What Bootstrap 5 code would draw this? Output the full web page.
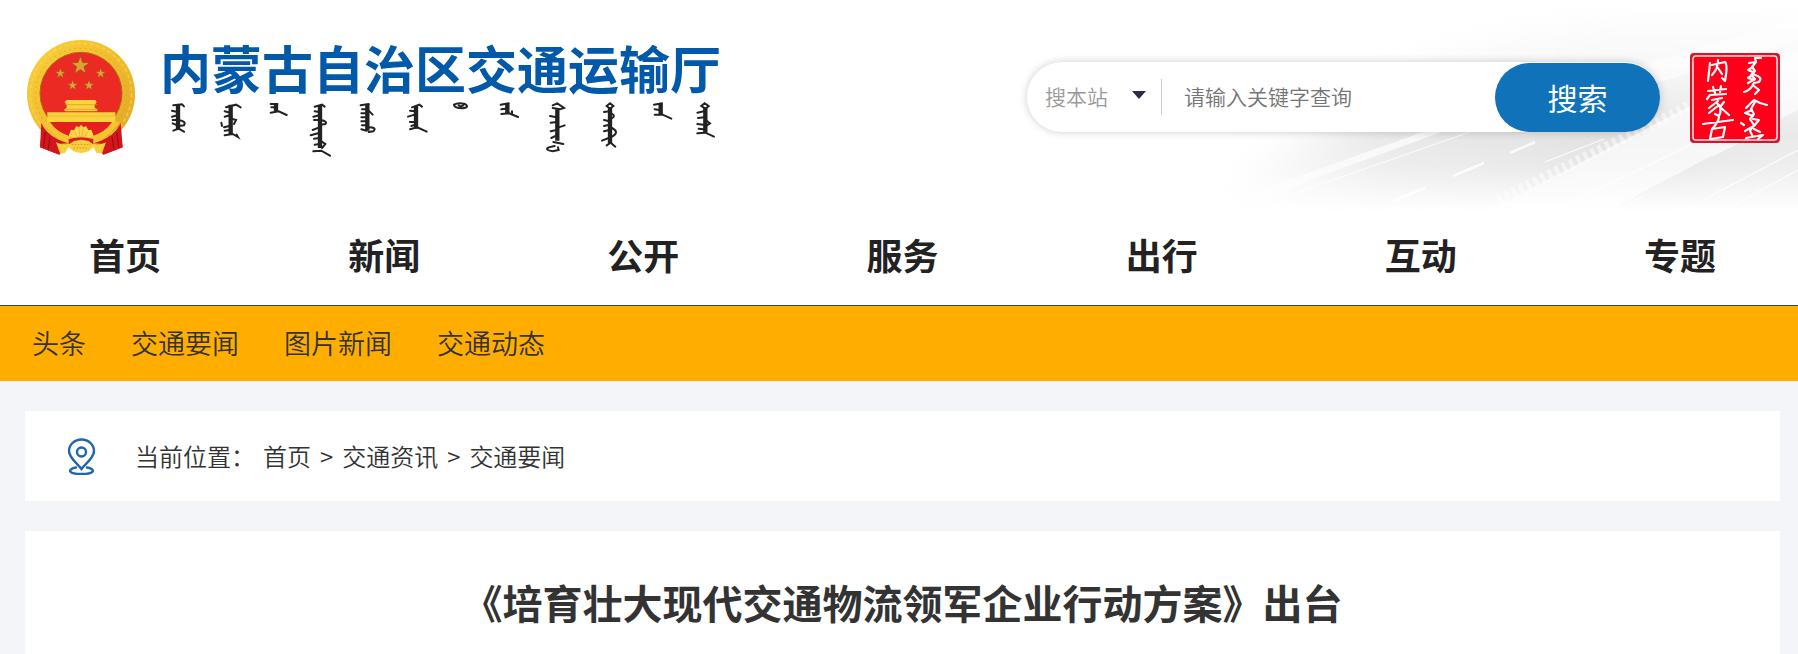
<!DOCTYPE html>
<html lang="zh-CN">
<head>
<meta charset="utf-8">
<meta name="viewport" content="width=device-width, initial-scale=1">
<title>《培育壮大现代交通物流领军企业行动方案》出台</title>
<link href="https://cdn.jsdelivr.net/npm/bootstrap@5.3.0/dist/css/bootstrap.min.css" rel="stylesheet">
<style>
  body { font-family: "Noto Sans CJK SC", sans-serif; background: #f3f5f9; color: #333; }
  a { color: inherit; text-decoration: none; }
  .top { background: #fff; min-height: 215px; padding: 36px 18px 0 26px; }
  .road { position: absolute; top: 0; right: 0; width: 618px; height: 225px; }
  .emblem { width: 110px; height: 115px; margin-top: 4px; }
  .brand { margin-left: 24px; }
  .brand-name { font-size: 51px; line-height: 62px; font-weight: 700; color: #0259a9; }
  .script-row { width: 580px; height: 64px; }
  .search { flex: 0 1 633px; height: 70px; margin: 26px 30px 0 auto; background: #fff; border-radius: 35px; box-shadow: 0 0 8px rgba(0,0,0,.2); }
  .search .form-select { width: 116px; height: 40px; margin-left: 18px; padding: 0 30px 2px 0; border: 0; background-color: transparent; color: #999; font-size: 21px; line-height: 36px; font-weight: 350;
    background-image: url("data:image/svg+xml,%3Csvg xmlns='http://www.w3.org/2000/svg' viewBox='0 0 14 8'%3E%3Cpath d='M0 0h14L7 8z' fill='%232c2c48'/%3E%3C/svg%3E"); background-size: 14px 8px; background-position: 87px 14px; }
  .search .form-control { height: 36px; padding: 0 0 2px 22px; border: 0; border-left: 1px solid #ccc; border-radius: 0; background: transparent; font-size: 21px; line-height: 34px; font-weight: 350; min-width: 0; }
  .search .form-control::placeholder { color: #757575; opacity: 1; }
  .search .btn { flex: 0 0 165px; height: 69px; align-self: flex-end; padding: 0; border: 0; border-radius: 35px; background: #1073b9; color: #fff; font-size: 30px; line-height: 69px; font-weight: 400; }
  .seal { width: 90px; height: 90px; margin-top: 17px; }
  .main-nav { background: #fff; height: 91px; padding: 0 82px 0 89px; border-bottom: 1px solid #22524a; }
  .main-nav a { font-size: 36px; line-height: 78px; font-weight: 700; color: #222; }
  .sub-nav { background: #ffae00; height: 75px; padding: 0 32px; gap: 45px; }
  .sub-nav a { font-size: 27px; line-height: 73px; font-weight: 350; color: #333; white-space: nowrap; }
  .page { padding: 30px 18px 0 25px; }
  .panel { background: #fff; }
  .crumbs { height: 90px; padding-left: 42px; margin-bottom: 30px; font-size: 24px; line-height: 90px; font-weight: 350; }
  .crumbs .pin { width: 30px; height: 38px; margin-right: 38px; }
  .crumbs .breadcrumb { --bs-breadcrumb-divider: ">"; --bs-breadcrumb-item-padding-x: 9px; --bs-breadcrumb-divider-color: #333; font-size: 24px; }
  .article { min-height: 123px; padding-top: 41px; }
  .article h1 { font-size: 40px; line-height: 60px; font-weight: 700; margin: 0; }
</style>
</head>
<body>
<header class="top d-flex align-items-start position-relative">
  <svg class="road" viewBox="0 0 618 225" preserveAspectRatio="none" aria-hidden="true">
    <defs>
      <linearGradient id="fadeY" x1="0" y1="0" x2="0" y2="1">
        <stop offset="0" stop-color="#fff" stop-opacity="0"/><stop offset=".3" stop-color="#fff" stop-opacity=".22"/><stop offset=".6" stop-color="#fff" stop-opacity=".85"/><stop offset=".74" stop-color="#fff" stop-opacity=".65"/><stop offset=".94" stop-color="#fff" stop-opacity="0"/>
      </linearGradient>
      <linearGradient id="shade" x1="0" y1="0" x2="1" y2="0">
        <stop offset=".04" stop-color="#dcdcdc" stop-opacity="0"/><stop offset=".3" stop-color="#dcdcdc" stop-opacity=".75"/><stop offset=".6" stop-color="#dcdcdc"/><stop offset="1" stop-color="#e8e8e8"/>
      </linearGradient>
      <mask id="soft"><rect width="618" height="225" fill="url(#fadeY)"/></mask>
      <filter id="haze" x="-20%" y="-20%" width="140%" height="140%"><feGaussianBlur stdDeviation="18"/></filter>
    </defs>
    <g mask="url(#soft)">
      <path d="M0 240 90 160 250 60 420 0H680V260z" fill="url(#shade)" filter="url(#haze)"/>
      <path d="M20 212 240 133 300 118 130 180 60 215z" fill="#fafafa" opacity=".85"/>
      <path d="M310 210 560 80 618 52 618 110 420 215H310z" fill="#f6f6f6" opacity=".9"/>
      <path d="M318 200 590 66" stroke="#fff" stroke-width="10" stroke-dasharray="4 4" fill="none" opacity=".5"/>
      <g stroke="#fff" fill="none" opacity=".8">
        <path d="M110 195 330 118" stroke-width="1"/><path d="M273 176 304 163M330 153 355 142M213 201 245 188" stroke-width="2.500"/>
        <path d="M365 162 424 139M532 156 570 137M440 210 464 195M372 212 618 92M500 212 618 150M530 218 618 170" stroke-width="1.200"/>
      </g>
      <path d="M430 75 618 18 618 40 480 82z" fill="#fff" opacity=".5"/>
    </g>
  </svg>

  <a href="#" class="d-flex position-relative" aria-label="内蒙古自治区交通运输厅">
    <svg class="emblem" viewBox="18 30 330 345" aria-hidden="true">
      <defs>
        <linearGradient id="gold" x1="0" y1="0" x2="1" y2="1"><stop offset="0" stop-color="#fbd23c"/><stop offset=".5" stop-color="#f0bc2d"/><stop offset="1" stop-color="#dfa324"/></linearGradient>
        <path id="star" d="M0-10 2.4-3.2 9.5-3.1 3.8 1.2 5.9 8.1 0 4-5.9 8.1-3.8 1.2-9.5-3.1-2.4-3.2z"/>
      </defs>
      <path d="M70 272 60 352 118 374 140 345 226 345 250 374 308 352 296 272z" fill="#d6181c"/>
      <circle cx="183" cy="192" r="162" fill="url(#gold)"/>
      <circle cx="183" cy="192" r="152" fill="none" stroke="#f9dc58" stroke-width="5" stroke-dasharray="12 7" opacity=".6"/>
      <circle cx="183" cy="192" r="137" fill="none" stroke="#d99a20" stroke-width="3" stroke-dasharray="5 11" opacity=".7"/>
      <circle cx="183" cy="190" r="123" fill="#ea2a23" stroke="#a86b16" stroke-width="3"/>
      <g fill="#dca235" stroke="#8f5312" stroke-width=".7">
        <use href="#star" transform="translate(181 107) scale(2.900)"/>
        <use href="#star" transform="translate(121 130) scale(1.600)"/><use href="#star" transform="translate(242 130) scale(1.600)"/>
        <use href="#star" transform="translate(158 166) scale(1.600)"/><use href="#star" transform="translate(207 166) scale(1.600)"/>
      </g>
      <path d="M140 210h86l4 7-6 8v8l10 6-4 5H136l-5-5 9-6v-8l-6-8z" fill="#fbd33f"/>
      <path d="M134 224h98M136 238h94" stroke="#d8951f" stroke-width="2"/>
      <path d="M82 247H286V276H82z" fill="#fbd33f"/><path d="M80 258H288" stroke="#e5ae2b" stroke-width="2"/>
      <path d="M66 276H300L276 304 220 350H146L92 304z" fill="#f5c432"/>
      <path d="M90 276H276Q256 308 210 321L183 300 156 321Q110 308 90 276z" fill="#e2211f"/>
      <path d="M64 278Q80 320 146 340L112 342 118 374 60 352zM302 278Q286 320 220 340L254 342 250 374 308 352z" fill="#d2161b"/>
      <path d="M76 306 70 352M90 320 84 360M290 306 296 352M276 320 282 360" stroke="#930b10" stroke-width="3"/>
      <path d="M146 318 153 299 162 301 169 288 177 292 183 284 190 292 198 288 205 301 214 299 221 318Q183 334 146 318z" fill="#ffd84a"/>
      <path d="M163 304 173 321M177 294 180 321M189 294 186 321M204 304 194 321" stroke="#e5a722" stroke-width="2"/>
      <path d="M146 328Q183 316 220 328V342H146z" fill="#dd1d1d"/>
      <path d="M108 337Q130 348 148 342L162 333 183 329 206 333 218 342Q238 348 258 337L246 370H230L220 351 206 364 183 370 160 364 146 351 134 370H120z" fill="#f9cf3b"/>
      <path d="M155 344 212 344M160 354 206 354" stroke="#d8951f" stroke-width="3" stroke-dasharray="5 4"/>
    </svg>
    <span class="brand">
      <span class="brand-name d-block text-nowrap">内蒙古自治区交通运输厅</span>
      <svg class="script-row d-block" viewBox="0 0 1740 192" fill="none" stroke="#222" aria-hidden="true">
        <g stroke-width="13">
          <path d="M54 18V96M212 20V110M348 16V40M480 22V150M622 18V98M768 24V92M1042 16V48M1192 34V128M1350 30V136M1502 18V50M1636 30V104"/>
        </g>
        <g stroke-width="6" stroke-linecap="round">
          <path d="M40 22 66 19 72 25M36 38 52 42M36 56 52 52M38 66H54M38 76 52 82M56 66Q80 70 72 82L56 84M40 98 56 92 72 101"/>
          <path d="M198 28 228 20 242 28M194 40 210 44M194 56 210 52M184 74 186 84M214 62 228 66 222 78M192 88 208 84M194 98 208 96M194 112 218 108 234 117 230 110"/>
          <path d="M332 18H352M334 28H350M332 44 356 40 380 51"/>
          <path d="M464 26 486 20 494 26M464 40 478 42M460 56 478 52M462 66H480M482 66Q504 70 496 78L482 80M458 96 478 88M452 112 474 106M462 122 478 120M484 130 496 138 486 150M464 140 478 138M460 160 484 158 510 173"/>
          <path d="M602 22 626 18M606 34H620M604 46H620M626 38 638 50M604 58H620M604 70H620M606 82H620M604 94 620 98M626 88Q652 88 640 100L626 102"/>
          <path d="M756 28 778 20 786 26M750 38 766 40M744 56 764 50M750 72H766M754 84 766 80M750 94 772 88 800 101"/>
          <path d="M882 20Q895 12 915 18 930 28 908 31 882 30 882 20M896 22 902 26 910 22"/>
          <path d="M1022 20 1046 16M1024 34 1038 32M1024 48 1048 46 1074 57M1056 40V50"/>
          <path d="M1178 22 1192 16 1212 30 1200 34 1178 30M1170 54 1190 58M1172 74 1190 72M1172 100 1190 96M1196 88 1214 82M1180 132 1210 138M1184 144 1166 148Q1152 156 1178 160L1196 156 1194 148M1174 120 1190 112"/>
          <path d="M1350 16 1360 24 1350 32 1340 24zM1332 42 1348 40M1354 46Q1370 54 1354 62M1332 66 1348 70M1332 84 1348 80M1332 100 1348 96M1356 90Q1380 102 1356 116M1326 128 1346 120M1340 142 1352 134 1366 146"/>
          <path d="M1482 20 1506 16M1484 34 1498 36M1484 50 1508 50 1534 62"/>
          <path d="M1634 16 1646 24 1636 32 1624 24zM1612 44 1632 40M1614 60 1632 58M1640 68 1650 76 1638 84M1612 78 1630 80M1616 92 1630 94M1612 106 1636 104 1662 116"/>
        </g>
      </svg>
    </span>
  </a>

  <form class="search d-flex align-items-center position-relative" role="search">
    <select class="form-select flex-shrink-0" id="scope" aria-label="搜索范围"><option>搜本站</option></select>
    <input class="form-control flex-grow-1" id="keyword" type="text" placeholder="请输入关键字查询" aria-label="关键字">
    <button class="btn" type="button">搜索</button>
  </form>

  <svg class="seal flex-shrink-0 position-relative" viewBox="0 0 90 90" role="img" aria-label="内蒙古">
    <rect width="90" height="90" rx="4" fill="#d9142a"/>
    <rect x="3" y="3" width="84" height="84" rx="3" fill="#fe0019" stroke="#ffdfe2" stroke-width="1.600"/>
    <g fill="none" stroke="#fff" stroke-width="2.200" stroke-linecap="round" stroke-linejoin="round">
      <path d="M20 10 18 28M22 12 35 9Q38 12 35 28L32 25M28 7Q28 16 22 22M28 15 32 21"/>
      <path d="M18 38 36 36M23 34 25 40M31 33 30 39M17 46 20 42 36 41M22 47 32 45M28 48 19 55M27 50Q33 56 29 63L25 61M29 52 19 60M34 49 30 54 39 62"/>
      <path d="M13 71 43 67M29 64Q28 70 22 76M22 76 20 86M22 76 35 74 33 84 21 86"/>
      <path d="M71 5 65 5 66 9 59 10M66 9 62 14 65 18 61 22 65 26 58 30M63 14 58 17 63 19M64 21 58 25 64 27M65 22Q73 24 69 29L64 30M64 30Q60 38 54 39M64 33 69 37 65 41"/>
      <path d="M56 55 64 47 70 50 77 52M65 49 61 56 64 61 60 66 64 72 60 78 63 84M62 57 55 60 63 63M63 66 69 67 64 73M62 74 55 78M51 70 54 72M56 85 73 82 68 86M64 76 70 79"/>
    </g>
  </svg>
</header>

<nav class="main-nav d-flex justify-content-between" aria-label="主导航">
  <a href="#">首页</a><a href="#">新闻</a><a href="#">公开</a><a href="#">服务</a><a href="#">出行</a><a href="#">互动</a><a href="#">专题</a>
</nav>
<nav class="sub-nav d-flex" aria-label="新闻栏目">
  <a href="#">头条</a><a href="#">交通要闻</a><a href="#">图片新闻</a><a href="#">交通动态</a>
</nav>

<main class="page">
  <nav class="panel crumbs d-flex align-items-center" aria-label="当前位置">
    <svg class="pin" viewBox="0 0 30 38" fill="none" stroke="#1f66ab" stroke-width="2.400" stroke-linecap="round" aria-hidden="true">
      <path d="M14.500 32C10 26 2 21 2 14a12.500 11.500 0 0 1 25 0C27 21 19 26 14.500 32z"/><circle cx="14.500" cy="15" r="4.500"/>
      <path d="M9 30.500C0 32 1 37 14.500 37S29 32 20 30.500"/>
    </svg>
    <span>当前位置：</span>
    <ol class="breadcrumb mb-0 ms-2">
      <li class="breadcrumb-item"><a href="#">首页</a></li>
      <li class="breadcrumb-item"><a href="#">交通资讯</a></li>
      <li class="breadcrumb-item"><a href="#">交通要闻</a></li>
    </ol>
  </nav>
  <article class="panel article text-center">
    <h1>《培育壮大现代交通物流领军企业行动方案》出台</h1>
  </article>
</main>
<script src="https://cdn.jsdelivr.net/npm/bootstrap@5.3.0/dist/js/bootstrap.bundle.min.js"></script>
</body>
</html>
